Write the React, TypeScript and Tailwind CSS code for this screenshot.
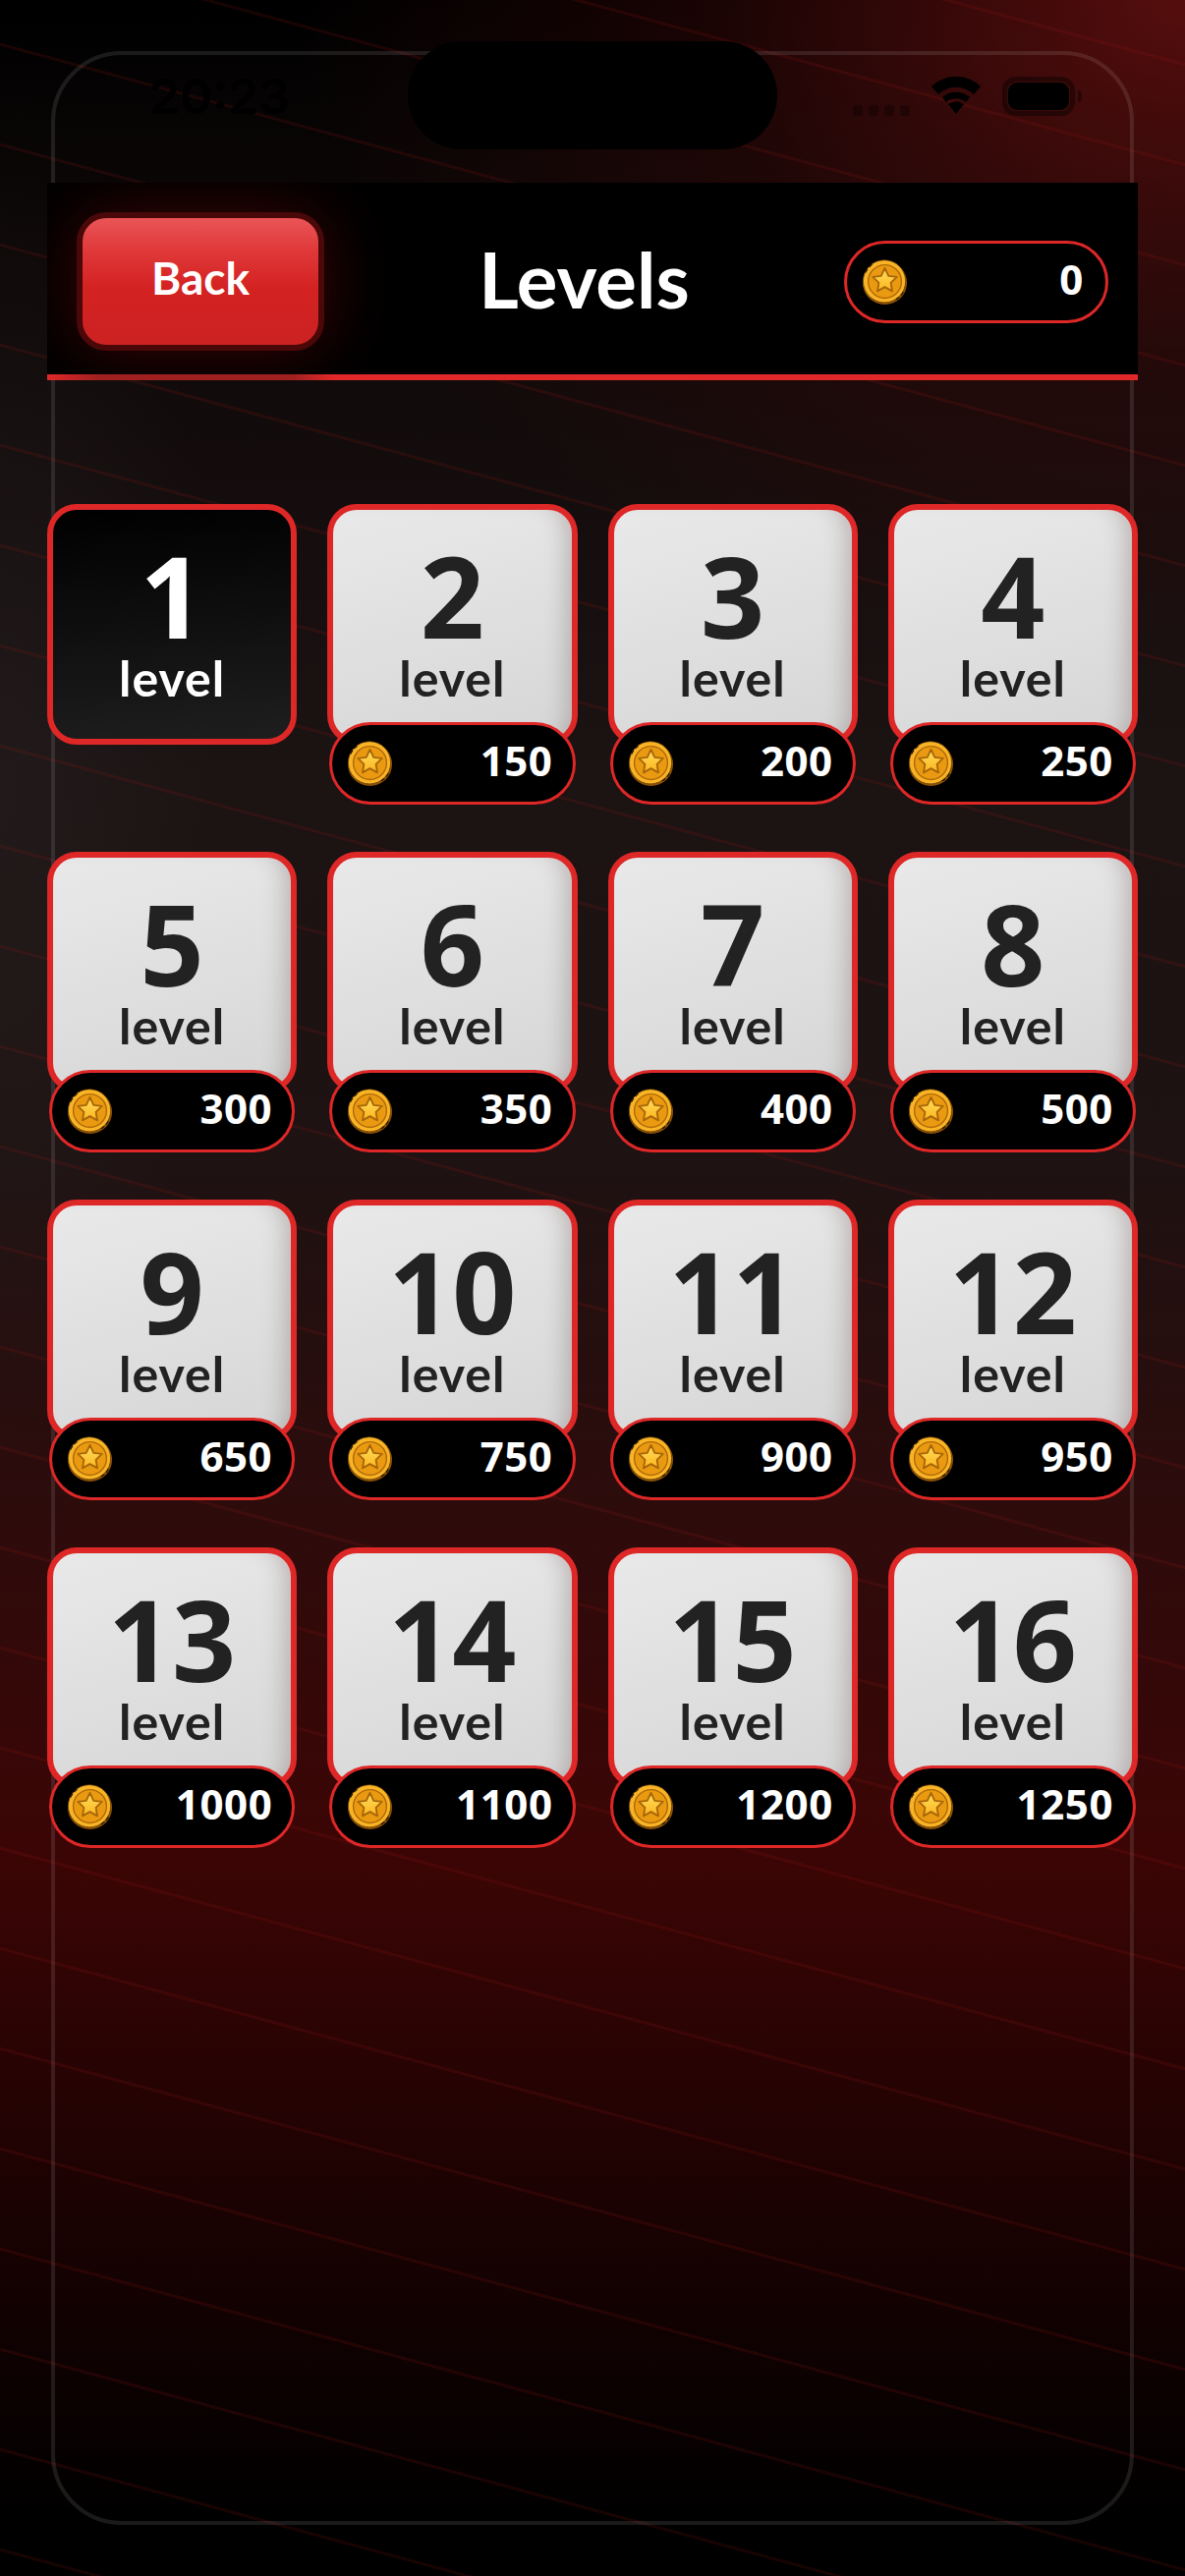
import { useId } from "react";

const levels = [
  { n: 1, price: null },
  { n: 2, price: 150 },
  { n: 3, price: 200 },
  { n: 4, price: 250 },
  { n: 5, price: 300 },
  { n: 6, price: 350 },
  { n: 7, price: 400 },
  { n: 8, price: 500 },
  { n: 9, price: 650 },
  { n: 10, price: 750 },
  { n: 11, price: 900 },
  { n: 12, price: 950 },
  { n: 13, price: 1000 },
  { n: 14, price: 1100 },
  { n: 15, price: 1200 },
  { n: 16, price: 1250 },
];

function Coin() {
  const id = useId();
  return (
    <svg viewBox="0 0 100 100" className="w-[47px] h-[48px] shrink-0">
      <defs>
        <linearGradient id={id} x1="0" y1="0" x2="0" y2="1">
          <stop offset="0" stopColor="#ffdf5e" />
          <stop offset="1" stopColor="#fbb41d" />
        </linearGradient>
      </defs>
      <ellipse cx="50" cy="52" rx="48" ry="47" fill="#8f5307" />
      <ellipse cx="49" cy="48.5" rx="46" ry="46" fill="#f8b425" stroke="#5a3605" strokeWidth="1.5" />
      <circle cx="50" cy="49" r="36" fill="#e99a10" stroke="#b0690a" strokeWidth="3" />
      <polygon
        points="50,20 58,37 76,39 63,52 66,70 50,61 34,70 37,52 24,39 42,37"
        fill={`url(#${id})`}
        stroke="#a8660a"
        strokeWidth="4"
        strokeLinejoin="round"
      />
      <path d="M8 30 A46 46 0 0 1 26 10 M74 88 A46 46 0 0 0 90 72" fill="none" stroke="#1f1203" strokeWidth="2.5" strokeDasharray="9 5" />
    </svg>
  );
}

function PricePill({ price, className }: { price: number; className: string }) {
  return (
    <div className={`flex items-center justify-between rounded-full border-[3px] border-[#de2727] bg-black ${className}`}>
      <Coin />
      <span className="font-['Open_Sans',sans-serif] text-[42px] leading-none font-bold tracking-[0.6px] text-white pb-[6px]">{price}</span>
    </div>
  );
}

function LevelCard({ n, price }: { n: number; price: number | null }) {
  const locked = price !== null;
  return (
    <div className="relative h-[305px]">
      <div
        className={`h-[245px] rounded-[30px] border-[6px] border-[#de2727] flex flex-col items-center pt-[37px] ${
          locked
            ? "bg-[linear-gradient(165deg,#e9e9e9,#d6d6d6)] text-[#222222] shadow-[inset_-22px_0_20px_-14px_rgba(120,100,100,0.32)]"
            : "bg-[linear-gradient(175deg,#000000,#1e1e1e)] text-white"
        }`}
      >
        <div className="font-['Open_Sans',sans-serif] text-[114px] leading-[100px] font-[750]">{n}</div>
        <div className="font-['Lato',sans-serif] text-[50px] leading-[48px] font-bold mt-[10px] tracking-[1px]">level</div>
      </div>
      {locked && (
        <PricePill price={price} className="absolute left-[2px] right-[2px] top-[222px] h-[84px] pl-[15px] pr-[20px]" />
      )}
    </div>
  );
}

export default function App() {
  return (
    <div className="relative h-[2622px] w-full overflow-hidden bg-[repeating-linear-gradient(15.16deg,transparent_0,transparent_24.5px,rgba(170,20,20,0.14)_24.5px,rgba(170,20,20,0.14)_27.5px,transparent_27.5px,transparent_98.45px),radial-gradient(ellipse_900px_700px_at_100%_0%,rgba(90,14,14,0.95),rgba(60,8,8,0.4)_55%,transparent_100%),radial-gradient(ellipse_220px_700px_at_0%_30%,rgba(60,60,60,0.18),transparent_100%),linear-gradient(180deg,#000000_0%,#0e0808_10%,#1c1313_30%,#1e1212_45%,#3c0505_72%,#1a0202_86%,#000000_98%)]">
      {/* device outline */}
      <div className="absolute left-[52px] right-[52px] top-[52px] h-[2518px] rounded-[72px] border-[4px] border-white/10" />

      {/* status bar */}
      <div className="relative flex h-[186px] items-start justify-between pl-[152px] pr-[105px] pt-[68px]">
        <span className="font-['Inter',sans-serif] text-[50px] leading-[60px] font-semibold text-black">20:23</span>
        <div className="flex items-start gap-[22px] pt-[10px]">
          <div className="flex gap-[6px] pt-[29px]">
            <span className="h-[11px] w-[10px] rounded-[3px] bg-black/30" />
            <span className="h-[11px] w-[10px] rounded-[3px] bg-black/30" />
            <span className="h-[11px] w-[10px] rounded-[3px] bg-black/30" />
            <span className="h-[11px] w-[10px] rounded-[3px] bg-black/30" />
          </div>
          <svg viewBox="0 0 50 38" className="h-[38px] w-[50px]">
            <path d="M25 38 L17 28 A13 13 0 0 1 33 28 Z" fill="#000" />
            <path d="M11 21 A21 21 0 0 1 39 21 L35 26 A15.5 15.5 0 0 0 15 26 Z" fill="#000" />
            <path d="M0 10 A36 36 0 0 1 50 10 L43 18 A26 26 0 0 0 7 18 Z" fill="#000" />
          </svg>
          <div className="flex items-center gap-[3px]">
            <div className="h-[40px] w-[74px] rounded-[14px] border-[5px] border-black/40 p-[1px]">
              <div className="h-full w-full rounded-[9px] bg-black" />
            </div>
            <span className="h-[12px] w-[4px] rounded-r-full bg-black/40" />
          </div>
        </div>
        <div className="absolute left-[415px] top-[42px] h-[110px] w-[376px] rounded-[55px] bg-black" />
      </div>

      {/* header */}
      <div className="relative mx-[48px]">
        <div className="flex h-[195px] items-center justify-between overflow-hidden bg-black pl-[30px] pr-[30px] pt-[6px]">
          <button className="relative flex h-[141px] w-[252px] items-center justify-center rounded-[30px] border-[6px] border-[#4a0808] bg-[linear-gradient(180deg,#ea5557_0%,#e0393a_25%,#d42222_55%,#cc2222_100%)] pb-[8px] font-['Lato',sans-serif] text-[46px] font-bold text-white shadow-[0_0_70px_rgba(130,10,10,0.45)]">
            Back
          </button>
          <h1 className="relative mt-[-5px] font-['Lato',sans-serif] text-[78px] leading-[90px] font-bold text-white">Levels</h1>
          <PricePill price={0} className="relative h-[84px] w-[269px] pl-[15px] pr-[22px]" />
        </div>
        <div className="h-[6px] bg-[linear-gradient(90deg,#e02828_0,#a02020_52px,#a02020_250px,#e02828_290px)]" />
      </div>

      {/* level grid */}
      <div className="mx-[48px] mt-[126px] grid grid-cols-4 gap-x-[31px] gap-y-[49px]">
        {levels.map((l) => (
          <LevelCard key={l.n} n={l.n} price={l.price} />
        ))}
      </div>
    </div>
  );
}
